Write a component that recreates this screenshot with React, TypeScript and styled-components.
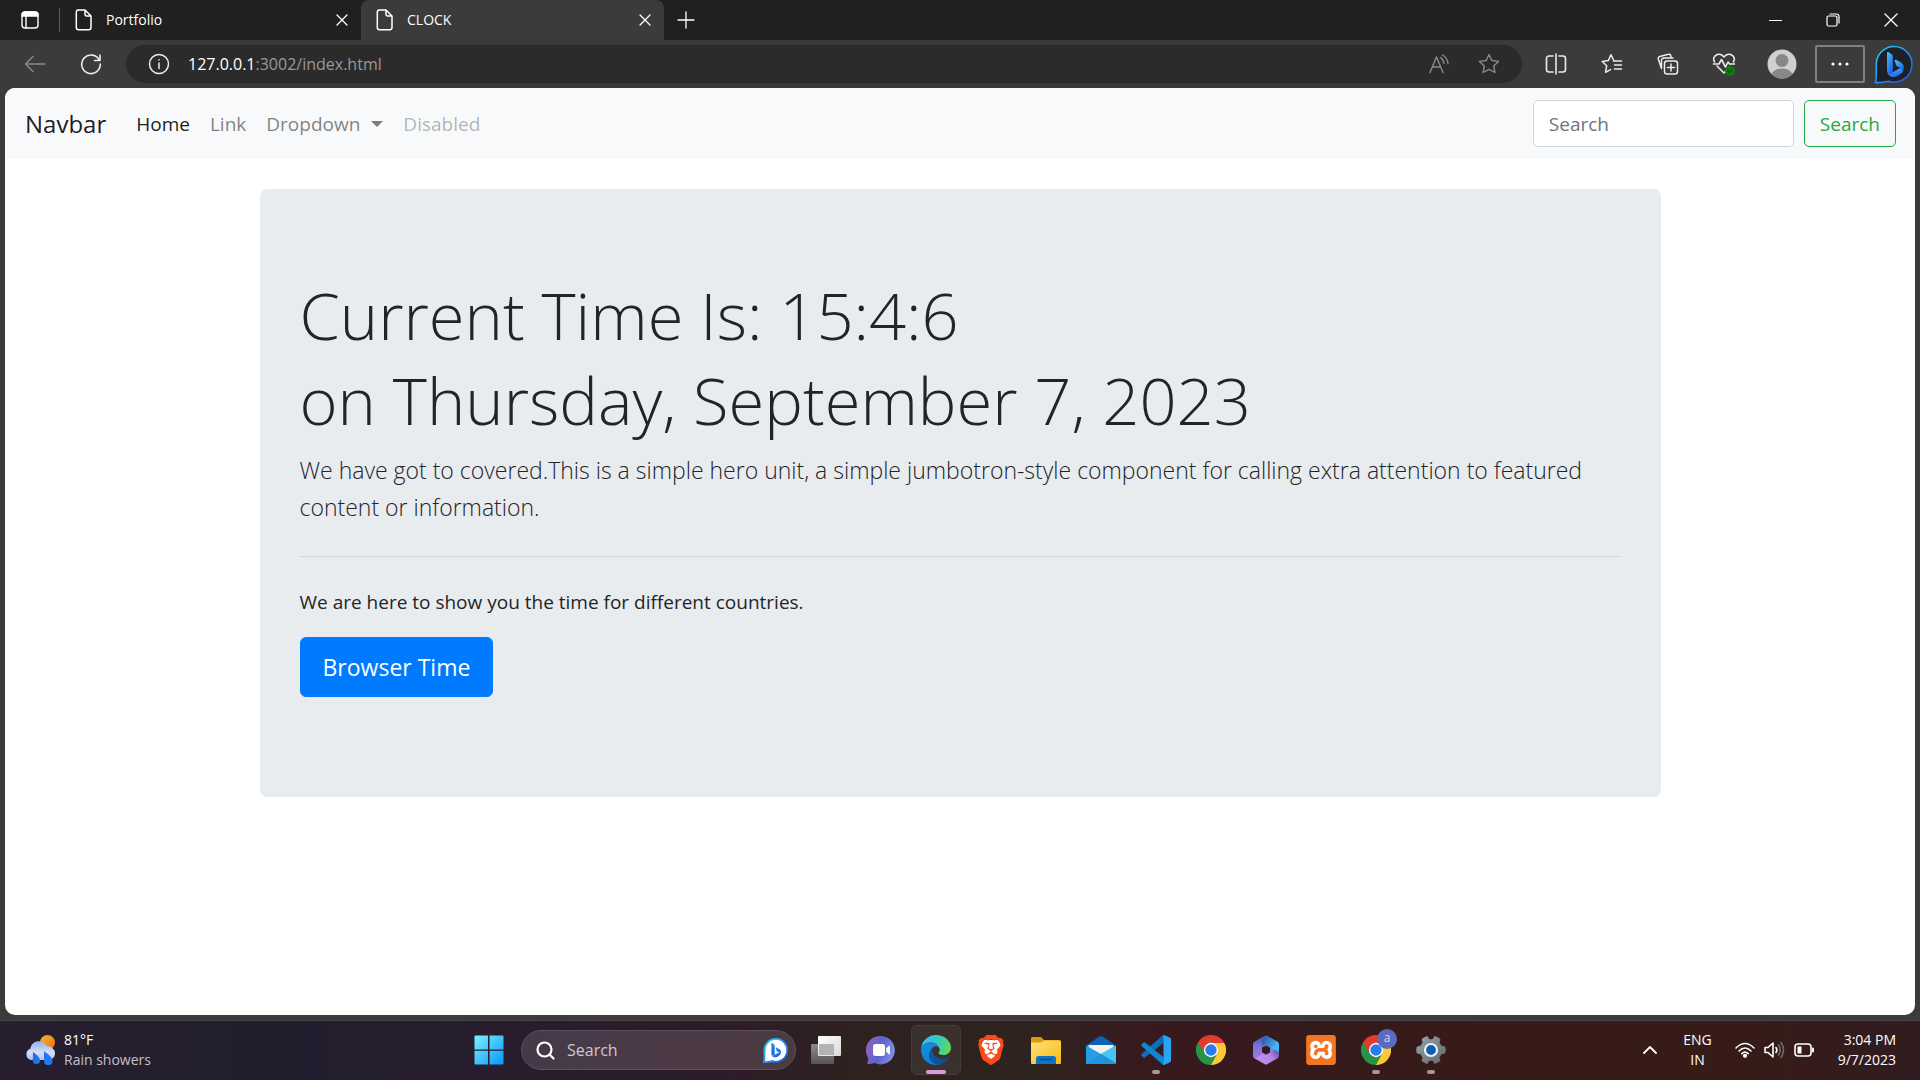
import React from "react";
import styled, { createGlobalStyle } from "styled-components";
import { SiBrave, SiXampp } from "react-icons/si";
import { BsBing } from "react-icons/bs";

const GlobalStyle = createGlobalStyle`
  *, *::before, *::after { box-sizing: border-box; }
  body {
    margin: 0;
    font-family: "Open Sans", "Noto Sans", sans-serif;
    color: #212529;
    background: #3b3b3b;
  }
  button, input { font-family: inherit; }
  svg { display: block; flex: none; }
`;

/* ---------- layout ---------- */

const Desktop = styled.div`
  min-height: 100vh;
  display: flex;
  flex-direction: column;
`;

const PlainButton = styled.button`
  display: flex;
  align-items: center;
  justify-content: center;
  padding: 0;
  border: 0;
  background: none;
  color: inherit;
`;

/* ---------- tab strip ---------- */

const TabStrip = styled.header`
  display: flex;
  height: 40px;
  background: #202020;
  color: #fff;
`;

const TabActions = styled(PlainButton)`
  width: 60px;
  border-right: 1px solid #5a5a5a;
  margin: 8px 0;
`;

const Tab = styled.div<{ $active?: boolean }>`
  display: flex;
  align-items: center;
  width: ${(p) => (p.$active ? 303 : 301)}px;
  padding: 0 11px 0 15px;
  gap: 13px;
  font-size: 14px;
  border-radius: 8px 8px 0 0;
  background: ${(p) => (p.$active ? "#3b3b3b" : "transparent")};
`;

const TabTitle = styled.span`
  flex: 1;
  line-height: 20px;
`;

const TabClose = styled(PlainButton)`
  width: 16px;
  height: 20px;
`;

const NewTab = styled(PlainButton)`
  width: 44px;
`;

const WindowControls = styled.div`
  display: flex;
  margin-left: auto;
`;

const WindowControl = styled(PlainButton)`
  width: 58px;
`;

/* ---------- toolbar ---------- */

const Toolbar = styled.div`
  display: flex;
  align-items: center;
  height: 48px;
  padding: 0 7px 0 10px;
  background: #3b3b3b;
  color: #e8e8e8;
`;

const ToolButton = styled(PlainButton)<{ $dim?: boolean; $wide?: boolean }>`
  width: ${(p) => (p.$wide ? 54 : 50)}px;
  height: 38px;
  margin-right: 6px;
  color: ${(p) => (p.$dim ? "#8a8a8a" : "#ececec")};
`;

const AddressBar = styled.div`
  display: flex;
  flex: 1;
  align-items: center;
  height: 38px;
  margin: 0 9px 0 4px;
  padding: 0 8px;
  border-radius: 19px;
  background: #2b2b2b;
`;

const AddressButton = styled(ToolButton)`
  margin: 0;
`;

const Url = styled.div`
  flex: 1;
  margin-left: 4px;
  color: #9a9a9a;
  font-size: 16px;
  line-height: 24px;
`;

const Host = styled.span`
  color: #fff;
`;

const MenuButton = styled(ToolButton)`
  border: 2px solid #7d8285;
  border-radius: 2px;
  margin-right: 9px;
`;

const BingButton = styled(PlainButton)`
  width: 39px;
  height: 40px;
`;

/* ---------- page ---------- */

const Page = styled.div`
  flex: 1;
  margin: 0 5px 5px;
  overflow: hidden;
  border-radius: 10px;
  background: #fff;
`;

const Navbar = styled.nav`
  display: flex;
  align-items: center;
  padding: 12px 19px 12px 20px;
  background: #f8f9fa;
  font-size: 19px;
  line-height: 30px;
`;

const Brand = styled.a`
  margin-right: 30px;
  color: rgba(0, 0, 0, 0.9);
  font-size: 24px;
  text-decoration: none;
`;

const NavList = styled.ul`
  display: flex;
  gap: 20px;
  margin: 0;
  padding: 0;
  list-style: none;
`;

const tones = {
  active: "rgba(0, 0, 0, 0.9)",
  normal: "rgba(0, 0, 0, 0.5)",
  disabled: "rgba(0, 0, 0, 0.3)",
};

const NavLink = styled.a<{ $tone: keyof typeof tones }>`
  display: flex;
  align-items: center;
  gap: 11px;
  color: ${(p) => tones[p.$tone]};
  text-decoration: none;
`;

const Caret = styled.span`
  border: 6px solid transparent;
  border-top-color: currentColor;
  border-bottom: 0;
`;

const SearchForm = styled.form`
  display: flex;
  gap: 10px;
  margin-left: auto;
`;

const SearchInput = styled.input`
  width: 261px;
  height: 47px;
  padding: 0 15px;
  border: 1px solid #ced4da;
  border-radius: 5px;
  background: #fff;
  font-size: 19px;
  &::placeholder {
    color: #6c757d;
    opacity: 1;
  }
`;

const SearchButton = styled.button`
  height: 47px;
  padding: 0 15px;
  border: 1px solid #28a745;
  border-radius: 5px;
  background: transparent;
  color: #28a745;
  font-size: 19px;
`;

const Jumbotron = styled.main`
  max-width: 1401px;
  margin: 30px auto;
  padding: 84px 40px 80px;
  border-radius: 7px;
  background: #e9ecef;
`;

const Clock = styled.h1`
  margin: 0 0 9px;
  font-size: 65px;
  font-weight: 300;
  line-height: 85px;
`;

const Lead = styled.p`
  margin: 0;
  font-size: 23px;
  font-weight: 300;
  line-height: 37px;
`;

const Rule = styled.hr`
  margin: 30px 0;
  border: 0;
  border-top: 1px solid rgba(0, 0, 0, 0.1);
`;

const Note = styled.p`
  margin: 0 0 20px;
  font-size: 19px;
  line-height: 30px;
`;

const PrimaryLink = styled.a`
  display: inline-block;
  margin-bottom: 20px;
  padding: 11px 22px;
  border: 1px solid #007bff;
  border-radius: 6px;
  background: #007bff;
  color: #fff;
  font-size: 23px;
  line-height: 36px;
  text-decoration: none;
  vertical-align: top;
`;

/* ---------- taskbar ---------- */

const Taskbar = styled.footer`
  display: grid;
  grid-template-columns: 1fr auto 1fr;
  align-items: center;
  height: 60px;
  padding-bottom: 1px;
  border-top: 1px solid #4a4347;
  background: linear-gradient(90deg, #271e2f 0%, #221e2e 15%, #271d2e 25%, #2d1c2a 38%, #2e211f 44%, #2f2320 54%, #38191e 60%, #351a1b 68%, #381b16 80%, #361b18 92%, #301c20 100%);
  color: #fff;
  font-size: 14px;
  line-height: 20px;
`;

const Weather = styled(PlainButton)`
  justify-self: start;
  gap: 9px;
  margin-left: 25px;
  font-size: 14px;
  line-height: 20px;
  text-align: left;
`;

const Muted = styled.span`
  display: block;
  color: #c4c0c6;
`;

const TaskItems = styled.div`
  display: flex;
  align-items: center;
  gap: 5px;
`;

const TaskButton = styled(PlainButton)<{ $active?: boolean; $running?: boolean }>`
  position: relative;
  width: 50px;
  height: 50px;
  border: 1px solid ${(p) => (p.$active ? "#473c3b" : "transparent")};
  border-radius: 6px;
  background: ${(p) => (p.$active ? "#3a302e" : "none")};
  &::after {
    content: "";
    display: ${(p) => (p.$active || p.$running ? "block" : "none")};
    position: absolute;
    left: 50%;
    bottom: 0;
    width: ${(p) => (p.$active ? 20 : 8)}px;
    height: 4px;
    border-radius: 2px;
    transform: translateX(-50%);
    background: ${(p) => (p.$active ? "#d99be0" : "#a39799")};
  }
`;

const ProfileBadge = styled.span`
  position: absolute;
  top: 3px;
  right: 3px;
  width: 20px;
  height: 20px;
  border-radius: 50%;
  background: #5c6bc0;
  color: #d5daf5;
  font-size: 12px;
  line-height: 18px;
`;

const TaskSearch = styled.label`
  display: flex;
  align-items: center;
  width: 275px;
  height: 40px;
  margin-left: 2px;
  padding: 0 7px 0 14px;
  border: 1px solid #5d4f5e;
  border-radius: 20px;
  background: linear-gradient(90deg, #453a4a, #4c3a46 60%, #4a3b41);
`;

const TaskSearchInput = styled.input`
  flex: 1;
  min-width: 0;
  margin-left: 12px;
  padding: 0;
  border: 0;
  outline: 0;
  background: none;
  color: #fff;
  font-size: 16px;
  &::placeholder {
    color: #cfc8d0;
    opacity: 1;
  }
`;

const Tray = styled.div`
  display: flex;
  align-items: center;
  justify-self: end;
  margin-right: 24px;
`;

const TrayText = styled(PlainButton)<{ $align: "center" | "right" }>`
  display: block;
  font-size: 14px;
  line-height: 20px;
  text-align: ${(p) => p.$align};
`;

const TrayIcons = styled(PlainButton)`
  gap: 9px;
  margin: 0 24px 0 23px;
`;

const TrayArrow = styled(PlainButton)`
  margin-right: 26px;
`;

/* ---------- line icons ---------- */

type LineProps = { w?: number; h?: number; sw?: number; children: React.ReactNode };

const Line = ({ w = 24, h = 24, sw = 1.4, children }: LineProps) => (
  <svg width={w} height={h} viewBox={`0 0 ${w} ${h}`} fill="none" stroke="currentColor" strokeWidth={sw} strokeLinecap="round" strokeLinejoin="round" aria-hidden="true">
    {children}
  </svg>
);

const CloseIcon = ({ size = 12 }: { size?: number }) => (
  <Line w={size} h={size} sw={1.3}>
    <path d={`M1 1 ${size - 1} ${size - 1}M${size - 1} 1 1 ${size - 1}`} />
  </Line>
);

const FileIcon = () => (
  <Line w={18} h={22} sw={1.5}>
    <path d="M3 1h7l6 6v11.500a2.200 2.200 0 0 1-2.200 2.200H3.500A2.200 2.200 0 0 1 1.300 18.500V3A2 2 0 0 1 3 1zM10 1v4.500A1.500 1.500 0 0 0 11.500 7H16" />
  </Line>
);

const TabActionsIcon = () => (
  <Line w={18} h={18}>
    <rect x="1" y="1" width="16" height="16" rx="3" />
    <path d="M1 5V4a3 3 0 0 1 3-3h10a3 3 0 0 1 3 3v1z" fill="currentColor" />
    <path d="M5 5v12" />
  </Line>
);

const BingBubble = ({ size, light }: { size: number; light?: boolean }) => (
  <svg width={size} height={size} viewBox="0 0 40 40" aria-hidden="true">
    <defs>
      <linearGradient id={`bubble${size}`} x1="0" y1="0" x2="1" y2="1">
        <stop offset="0" stopColor="#20d5f5" />
        <stop offset=".55" stopColor="#2b8bf5" />
        <stop offset="1" stopColor="#1b4fd0" />
      </linearGradient>
      <linearGradient id={`b${size}`} x1="0" y1="0" x2="0.6" y2="1">
        <stop offset="0" stopColor={light ? "#1a9ce8" : "#45c5fa"} />
        <stop offset="1" stopColor="#1f62e6" />
      </linearGradient>
    </defs>
    <path
      d="M20.500 1.500a18.300 18.300 0 1 1-5.600 35.700C10 38 5.500 39 1.500 38.500 2.600 35 2.200 31 2.400 20A18.200 18.200 0 0 1 20.500 1.500z"
      fill={light ? "#fff" : "#1d2026"}
      stroke={`url(#bubble${size})`}
      strokeWidth={light ? 3 : 1.600}
    />
    <g transform={light ? "translate(9 8) scale(1.45)" : "translate(8.500 7) scale(1.62)"}>
      <BsBing size={16} fill={`url(#b${size})`} />
    </g>
  </svg>
);

/* ---------- application logos ---------- */

const WeatherIcon = () => (
  <svg width="30" height="30" viewBox="0 0 30 30" aria-hidden="true">
    <defs>
      <linearGradient id="sun" x1="0" y1="0" x2="1" y2="1">
        <stop offset="0" stopColor="#f9b62e" />
        <stop offset="1" stopColor="#ee6a14" />
      </linearGradient>
      <linearGradient id="cloud" x1="0" y1="0" x2="0" y2="1">
        <stop offset="0" stopColor="#8fb0f0" />
        <stop offset=".6" stopColor="#d4e0fa" />
        <stop offset="1" stopColor="#a9c1f3" />
      </linearGradient>
      <linearGradient id="drop" x1="0" y1="0" x2="1" y2="1">
        <stop offset="0" stopColor="#2c67e8" />
        <stop offset="1" stopColor="#1583fb" />
      </linearGradient>
    </defs>
    <circle cx="22.500" cy="7.500" r="7.500" fill="url(#sun)" />
    <path d="M6 25a6 6 0 0 1-.500-11.500C6 9 9.500 6.300 14 6.300c4 0 6.800 2 8 5 4 0 8 2.700 8 7 0 4-3 6.700-6.500 6.700z" fill="url(#cloud)" />
    <path d="M8 17c4 3 7 5.500 7 8.500a3.600 3.600 0 0 1-7.200 0zM19 16c5 4 8.500 6.500 8.500 10a4.200 4.200 0 0 1-8.500 0z" fill="url(#drop)" />
  </svg>
);

const WindowsIcon = () => (
  <svg width="30" height="30" viewBox="0 0 30 30" aria-hidden="true">
    <defs>
      <linearGradient id="win" x1="0" y1="0" x2="30" y2="30" gradientUnits="userSpaceOnUse">
        <stop offset="0" stopColor="#7df3fb" />
        <stop offset="1" stopColor="#0795fb" />
      </linearGradient>
    </defs>
    <path d="M1.500.5H14v14H.5v-13a1 1 0 0 1 1-1zM15.500.5h13a1 1 0 0 1 1 1v13h-14zM.5 15.700H14v13.800H1.500a1 1 0 0 1-1-1zM15.500 15.700h14v12.800a1 1 0 0 1-1 1h-13z" fill="url(#win)" />
  </svg>
);

const TaskViewIcon = () => (
  <svg width="30" height="30" viewBox="0 0 30 30" aria-hidden="true">
    <defs>
      <linearGradient id="tv1" x1="0" y1="0" x2="1" y2="1">
        <stop offset="0" stopColor="#fff" />
        <stop offset="1" stopColor="#dadada" />
      </linearGradient>
      <linearGradient id="tv2" x1="0" y1="0" x2="0" y2="1">
        <stop offset="0" stopColor="#8b8b8b" />
        <stop offset="1" stopColor="#555" />
      </linearGradient>
    </defs>
    <rect y="9" width="23" height="20" rx="1" fill="url(#tv2)" />
    <rect x="7" y="1" width="23" height="20" rx="1" fill="url(#tv1)" />
    <path d="M8 9h15v11H8z" fill="#b3b3b3" />
  </svg>
);

const ChatIcon = () => (
  <svg width="30" height="30" viewBox="0 0 30 30" aria-hidden="true">
    <defs>
      <linearGradient id="chat" x1="0" y1="0.300" x2="1" y2="0.600">
        <stop offset="0" stopColor="#8f63b8" />
        <stop offset=".5" stopColor="#5e63ce" />
        <stop offset="1" stopColor="#8191e6" />
      </linearGradient>
    </defs>
    <path d="M15 1a14.200 14.200 0 1 1-6.500 27C6 29 3 29.300 1 29c1-2 1.500-4.500 1-6.500A14.200 14.200 0 0 1 15 1z" fill="url(#chat)" />
    <rect x="7" y="9" width="12" height="12" rx="2.500" fill="#fff" />
    <path d="M20.200 13.300 23 10.700q1-.6 1 .6v7.400q0 1.200-1 .6l-2.800-2.600z" fill="#fff" />
  </svg>
);

const EdgeIcon = () => (
  <svg width="30" height="30" viewBox="0 0 256 256" aria-hidden="true">
    <defs>
      <linearGradient id="e1" x1="60" y1="177" x2="240" y2="177" gradientUnits="userSpaceOnUse">
        <stop offset="0" stopColor="#0c59a4" />
        <stop offset="1" stopColor="#114a8b" />
      </linearGradient>
      <linearGradient id="e2" x1="150" y1="80" x2="40" y2="220" gradientUnits="userSpaceOnUse">
        <stop offset="0" stopColor="#1b7fc4" />
        <stop offset=".5" stopColor="#148cd8" />
        <stop offset="1" stopColor="#0a84de" />
      </linearGradient>
      <linearGradient id="e3" x1="10" y1="60" x2="250" y2="130" gradientUnits="userSpaceOnUse">
        <stop offset="0" stopColor="#35c1f1" />
        <stop offset=".5" stopColor="#35c8c0" />
        <stop offset="1" stopColor="#63db52" />
      </linearGradient>
    </defs>
    <path fill="url(#e1)" d="M231 190.500c-3.400 1.800-6.900 3.400-10.500 4.700a101.500 101.500 0 0 1-35.900 6.400c-47.300 0-88.500-32.500-88.500-74.300.1-11.400 6.400-21.900 16.400-27.300-42.800 1.800-53.800 46.400-53.800 72.500 0 73.900 68.100 81.400 82.800 81.400 7.900 0 19.800-2.300 27-4.600l1.300-.4a128.300 128.300 0 0 0 66.600-52.800 4 4 0 0 0-5.400-5.600z" />
    <path fill="url(#e2)" d="M105.700 241.400a79.200 79.200 0 0 1-22.700-21.300 80.700 80.700 0 0 1 29.500-120c3.200-1.500 8.500-4.100 15.600-4a32.400 32.400 0 0 1 25.700 13 31.900 31.900 0 0 1 6.300 18.700c0-.2 24.500-79.600-80-79.600-43.900 0-80 41.600-80 78.200a130.200 130.200 0 0 0 12.100 56 128 128 0 0 0 156.400 67 75.500 75.500 0 0 1-62.800-8z" />
    <path fill="url(#e3)" d="M152.300 148.900c-.8 1-3.300 2.500-3.300 5.700 0 2.600 1.700 5.100 4.700 7.200 14.400 10 41.500 8.700 41.600 8.700 10.700 0 21.100-2.900 30.300-8.300a61.400 61.400 0 0 0 30.400-52.900c.3-22.400-8-37.300-11.300-43.900C223.500 23.900 177.700 0 128 0A128 128 0 0 0 0 126.200C.5 89.700 36.800 60.200 80 60.200c3.500 0 23.500.3 42 10.100 16.300 8.600 24.900 18.900 30.800 29.200 6.200 10.700 7.300 24.100 7.300 29.500 0 5.300-2.700 13.300-7.800 19.900z" />
  </svg>
);

const BraveIcon = () => (
  <svg width="30" height="30" viewBox="0 0 30 30" aria-hidden="true">
    <path d="M7 5h16l2 6-4 12-6 4-6-4-4-12z" fill="#fff" />
    <SiBrave size={30} color="#fb4a1c" />
  </svg>
);

const FolderIcon = () => (
  <svg width="30" height="30" viewBox="0 0 30 30" aria-hidden="true">
    <defs>
      <linearGradient id="fold" x1="0" y1="0" x2="1" y2="1">
        <stop offset="0" stopColor="#ffe07a" />
        <stop offset="1" stopColor="#fcb914" />
      </linearGradient>
    </defs>
    <path d="M0 3.500A1.500 1.500 0 0 1 1.500 2H10l3 3h15a2 2 0 0 1 2 2v4H0z" fill="#dd9b08" />
    <path d="M0 7.500h10l3-2h15.500A1.500 1.500 0 0 1 30 7v21a1 1 0 0 1-1 1H1a1 1 0 0 1-1-1z" fill="url(#fold)" />
    <path d="M5 29v-5.500a2.500 2.500 0 0 1 2.500-2.500h15a2.500 2.500 0 0 1 2.500 2.500V29z" fill="#0f74c6" />
    <path d="M9 24.500h12" stroke="#0a4f90" strokeWidth="1.300" strokeLinecap="round" />
  </svg>
);

const MailIcon = () => (
  <svg width="30" height="30" viewBox="0 0 30 30" aria-hidden="true">
    <path d="M0 10.500 13.500 1.600q1.500-.9 3 0L30 10.500 15 20z" fill="#0c63b4" />
    <path d="M2.500 10h25v5L15 21 2.500 15z" fill="#f3f3f3" />
    <path d="M0 10.500 15 19l15-8.500V28a1 1 0 0 1-1 1H1a1 1 0 0 1-1-1z" fill="#249fe4" />
    <path d="M15 19l15-8.500V28z" fill="#47c6f6" />
    <path d="M15 19 30 28.500 29 29H1z" fill="#1f93dd" />
  </svg>
);

const CodeIcon = () => (
  <svg width="30" height="30" viewBox="0 0 30 30" aria-hidden="true">
    <path d="M22.500 8 4 22.400q-.8.6-1.500 0L.6 20.700q-.8-.8 0-1.600L21.500.6q.8-.7 1.800-.2z" fill="#0a6fb8" />
    <path d="M22.500 22 4 7.600q-.8-.6-1.500 0L.6 9.300q-.8.8 0 1.600l20.900 18.500q.8.700 1.800.2z" fill="#1285cf" />
    <path d="M21.500.600q.8-.8 2-.4l5.500 2.600q1 .6 1 1.700v21q0 1.200-1 1.700l-5.500 2.600q-1.200.4-2-.4 1 .5 1-1V1.600q0-1.500-1-1z" fill="#2aa5f0" />
  </svg>
);

const chromePart = "M15 8H28.300A15 15 0 0 0 2 7.500L8.900 18.500A7 7 0 0 1 15 8z";

const ChromeIcon = () => (
  <svg width="30" height="30" viewBox="0 0 30 30" aria-hidden="true">
    <path d={chromePart} fill="#fcc934" transform="rotate(120 15 15)" />
    <path d={chromePart} fill="#259547" transform="rotate(240 15 15)" />
    <path d={chromePart} fill="#e33b2e" />
    <circle cx="15" cy="15" r="7.200" fill="#fff" />
    <circle cx="15" cy="15" r="5.700" fill="#2a7bee" />
  </svg>
);

const OfficeIcon = () => (
  <svg width="30" height="30" viewBox="0 0 30 30" aria-hidden="true">
    <defs>
      <linearGradient id="o1" x1="0" y1="0" x2="0" y2="1">
        <stop offset="0" stopColor="#3a58b4" />
        <stop offset=".4" stopColor="#7f74dc" />
        <stop offset="1" stopColor="#b07ce0" />
      </linearGradient>
      <linearGradient id="o2" x1="0" y1="0" x2="1" y2="0.500">
        <stop offset="0" stopColor="#274c9e" />
        <stop offset=".7" stopColor="#3fa6e8" />
        <stop offset="1" stopColor="#55c8f8" />
      </linearGradient>
      <linearGradient id="o3" x1="0" y1="0.500" x2="1" y2="0">
        <stop offset="0" stopColor="#c68df0" />
        <stop offset=".5" stopColor="#b184e6" />
        <stop offset="1" stopColor="#44398f" />
      </linearGradient>
      <mask id="ring">
        <path d="M15 3 25.500 9v12L15 27 4.500 21V9z" fill="#fff" stroke="#fff" strokeWidth="5" strokeLinejoin="round" />
        <path d="M15 11.500 18 13.200v3.600L15 18.500 12 16.800v-3.600z" fill="#000" stroke="#000" strokeWidth="2" strokeLinejoin="round" />
      </mask>
    </defs>
    <g mask="url(#ring)">
      <path d="M0 0h30v30H0z" fill="url(#o1)" />
      <path d="M14 0h16v21l-10-5.500V12l-5-3-4 2q-1-7 3-11z" fill="url(#o2)" />
      <path d="M2 23q5 1 9-5l4 2 13-8 2 0v18H2z" fill="url(#o3)" />
      <path d="M20 12l10 0v7l-4-3z" fill="#45b6f0" />
    </g>
  </svg>
);

const XamppIcon = () => (
  <svg width="30" height="30" viewBox="0 0 30 30" aria-hidden="true">
    <rect x="2" y="2" width="26" height="26" rx="2" fill="#fff" />
    <SiXampp size={30} color="#f37623" />
  </svg>
);

const SettingsIcon = () => (
  <svg width="30" height="30" viewBox="0 0 30 30" aria-hidden="true">
    <defs>
      <linearGradient id="gear" x1="0" y1="0" x2="1" y2="1">
        <stop offset="0" stopColor="#9aa3a8" />
        <stop offset="1" stopColor="#5e686e" />
      </linearGradient>
    </defs>
    <path
      d="M11.300 1.600 13 4.500q2 .8 4 0l1.700-2.900q3 .6 5.300 2.700l-1 3.200q1.300 1.800 1.900 3.500l3.900 1q1 3 0 6l-3.900 1q-.6 1.900-1.900 3.500l1 3.200q-2.300 2.100-5.300 2.700L17 25.500q-2-.8-4 0l-1.700 2.900q-3-.6-5.300-2.700l1-3.200Q5.700 20.900 5.100 19l-3.900-1q-1-3 0-6l3.900-1Q5.700 9.300 7 7.500L6 4.300q2.300-2.100 5.300-2.700z"
      fill="url(#gear)"
      stroke="url(#gear)"
      strokeLinejoin="round"
    />
    <circle cx="15" cy="15" r="6" fill="#0f5fae" stroke="#eef3f7" strokeWidth="2.200" />
  </svg>
);

const apps = [
  { name: "Chat", icon: <ChatIcon /> },
  { name: "Edge", icon: <EdgeIcon />, active: true },
  { name: "Brave", icon: <BraveIcon /> },
  { name: "File Explorer", icon: <FolderIcon /> },
  { name: "Mail", icon: <MailIcon /> },
  { name: "Visual Studio Code", icon: <CodeIcon />, running: true },
  { name: "Chrome", icon: <ChromeIcon /> },
  { name: "Microsoft 365", icon: <OfficeIcon /> },
  { name: "XAMPP", icon: <XamppIcon /> },
  { name: "Chrome profile", icon: <ChromeIcon />, running: true, badge: "a" },
  { name: "Settings", icon: <SettingsIcon />, running: true },
];

const starPath = "M12 2.500l2.900 6 6.600.9-4.800 4.600 1.200 6.500-5.900-3.100-5.900 3.100 1.200-6.500L2.500 9.400l6.600-.9z";

/* ---------- sections ---------- */

const BrowserTabs = () => (
  <TabStrip>
    <TabActions aria-label="Tab actions"><TabActionsIcon /></TabActions>
    <Tab>
      <FileIcon />
      <TabTitle>Portfolio</TabTitle>
      <TabClose aria-label="Close Portfolio"><CloseIcon /></TabClose>
    </Tab>
    <Tab $active>
      <FileIcon />
      <TabTitle>CLOCK</TabTitle>
      <TabClose aria-label="Close CLOCK"><CloseIcon /></TabClose>
    </Tab>
    <NewTab aria-label="New tab">
      <Line w={18} h={18} sw={1.3}><path d="M9 1v16M1 9h16" /></Line>
    </NewTab>
    <WindowControls>
      <WindowControl aria-label="Minimize">
        <Line w={13} h={13} sw={1.2}><path d="M.5 6.500h12" /></Line>
      </WindowControl>
      <WindowControl aria-label="Restore">
        <Line w={14} h={14} sw={1.2}>
          <rect x="1" y="3" width="10" height="10" rx="1.500" />
          <path d="M4 1h6.500A2.500 2.500 0 0 1 13 3.500V10" />
        </Line>
      </WindowControl>
      <WindowControl aria-label="Close window"><CloseIcon size={14} /></WindowControl>
    </WindowControls>
  </TabStrip>
);

const BrowserToolbar = () => (
  <Toolbar>
    <ToolButton $dim aria-label="Back">
      <Line w={22} h={18}><path d="M21 9H1.500M9 1.500 1.500 9 9 16.500" /></Line>
    </ToolButton>
    <ToolButton aria-label="Refresh">
      <Line w={22} h={22} sw={1.600}><path d="M19.500 7.500A9.300 9.300 0 1 0 20.300 11M20 2v5.500h-5.500" /></Line>
    </ToolButton>
    <AddressBar>
      <AddressButton aria-label="Site information">
        <Line w={22} h={22} sw={1.500}>
          <circle cx="11" cy="11" r="9.500" />
          <path d="M11 10v5.500M11 6.700v.2" />
        </Line>
      </AddressButton>
      <Url><Host>127.0.0.1</Host>:3002/index.html</Url>
      <AddressButton $dim aria-label="Read aloud">
        <Line w={22} h={20}>
          <path d="M2 18.500 8.500 3 15 18.500M4.300 13h8.400M12.500 3.500q3 2 3.500 6M14.500 1q5 3 5.500 8.500" />
        </Line>
      </AddressButton>
      <AddressButton $dim aria-label="Add to favorites">
        <Line><path d={starPath} /></Line>
      </AddressButton>
    </AddressBar>
    <ToolButton aria-label="Split screen">
      <Line w={22} h={22} sw={1.600}>
        <path d="M8 3H4a2.500 2.500 0 0 0-2.500 2.500v11A2.500 2.500 0 0 0 4 19h4M14 3h4a2.500 2.500 0 0 1 2.500 2.500v11A2.500 2.500 0 0 1 18 19h-4M11 1v20" />
      </Line>
    </ToolButton>
    <ToolButton aria-label="Favorites">
      <Line w={22} h={22} sw={1.500}>
        <path d="M12.500 7 10 1.800 7.300 7.600 1.200 8.500l4.500 4.300-1.200 6.500 5-2.700M12.500 8h8M13.500 12h7M13.500 16h7" />
      </Line>
    </ToolButton>
    <ToolButton aria-label="Collections">
      <Line w={22} h={22} sw={1.500}>
        <rect x="7.500" y="8" width="13" height="13" rx="2.500" />
        <path d="M14 11v7M10.500 14.500h7M4.500 15.500 1.300 6a2 2 0 0 1 1.500-2.500l8.500-2.200a2 2 0 0 1 2.500 1.500l.5 2.200M4.500 15.500V7.500A2.500 2.500 0 0 1 7 5h9" />
      </Line>
    </ToolButton>
    <ToolButton aria-label="Browser essentials">
      <Line w={24} h={24} sw={1.600}>
        <path d="M2.500 10C0 5 4 2 7.500 2.300 10 2.500 12 5 12 5s2-2.500 4.500-2.700C20 2 24 5 21.500 10M5 14l7 7 2.500-2.500M1.500 12H7l2.500-4.500 4 7.500 2.500-5 1.500 2h5" />
        <circle cx="18" cy="19" r="5" fill="#107c10" stroke="none" />
        <path d="M16 19l1.500 1.500L20 18" stroke="#0a4f0a" />
      </Line>
    </ToolButton>
    <ToolButton $wide aria-label="Profile">
      <svg width="30" height="30" viewBox="0 0 30 30" aria-hidden="true">
        <clipPath id="avatar"><circle cx="15" cy="15" r="14.500" /></clipPath>
        <circle cx="15" cy="15" r="14.500" fill="#d2d0ce" />
        <circle cx="15" cy="11.500" r="6.500" fill="#8a8886" />
        <ellipse cx="15" cy="27" rx="11" ry="7.500" fill="#8a8886" clipPath="url(#avatar)" />
      </svg>
    </ToolButton>
    <MenuButton aria-label="Settings and more">
      <svg width="18" height="4" viewBox="0 0 18 4" fill="#fff" aria-hidden="true">
        <circle cx="2" cy="2" r="1.600" /><circle cx="9" cy="2" r="1.600" /><circle cx="16" cy="2" r="1.600" />
      </svg>
    </MenuButton>
    <BingButton aria-label="Bing chat"><BingBubble size={39} /></BingButton>
  </Toolbar>
);

const SiteNavbar = () => (
  <Navbar>
    <Brand href="#">Navbar</Brand>
    <NavList>
      <li><NavLink href="#" $tone="active">Home</NavLink></li>
      <li><NavLink href="#" $tone="normal">Link</NavLink></li>
      <li><NavLink href="#" $tone="normal">Dropdown<Caret /></NavLink></li>
      <li><NavLink href="#" $tone="disabled" aria-disabled="true">Disabled</NavLink></li>
    </NavList>
    <SearchForm onSubmit={(e) => e.preventDefault()}>
      <SearchInput type="search" placeholder="Search" aria-label="Search" />
      <SearchButton type="submit">Search</SearchButton>
    </SearchForm>
  </Navbar>
);

const SystemTaskbar = () => (
  <Taskbar>
    <Weather>
      <WeatherIcon />
      <span>81°F<Muted>Rain showers</Muted></span>
    </Weather>
    <TaskItems>
      <TaskButton aria-label="Start"><WindowsIcon /></TaskButton>
      <TaskSearch>
        <Line w={19} h={19} sw={2.200}>
          <circle cx="8.500" cy="8.500" r="7" />
          <path d="M13.800 13.800 17.500 17.500" />
        </Line>
        <TaskSearchInput type="text" placeholder="Search" aria-label="Taskbar search" />
        <BingBubble size={25} light />
      </TaskSearch>
      <TaskButton aria-label="Task view"><TaskViewIcon /></TaskButton>
      {apps.map((app) => (
        <TaskButton key={app.name} aria-label={app.name} $active={app.active} $running={app.running}>
          {app.icon}
          {app.badge && <ProfileBadge>{app.badge}</ProfileBadge>}
        </TaskButton>
      ))}
    </TaskItems>
    <Tray>
      <TrayArrow aria-label="Show hidden icons">
        <Line w={14} h={10} sw={1.800}><path d="M1 8l6-6 6 6" /></Line>
      </TrayArrow>
      <TrayText $align="center">ENG<br />IN</TrayText>
      <TrayIcons aria-label="Network, volume, battery">
        <Line w={20} h={16} sw={1.600}>
          <path d="M1 6q9-9 18 0M4 9q6-6 12 0M6.800 11.700q3.200-3 6.400 0" />
          <circle cx="10" cy="13.800" r="1.300" fill="currentColor" />
        </Line>
        <Line w={21} h={18} sw={1.600}>
          <path d="M1 6.500h3l5-4.500v14l-5-4.500H1z" />
          <path d="M12 6.500q1.800 2.500 0 5" />
          <path d="M14.500 4q3.500 5 0 10M17 1.500q5 7.500 0 15" stroke="#796a69" />
        </Line>
        <Line w={20} h={14} sw={1.600}>
          <rect x="1" y="1" width="16" height="12" rx="3" />
          <path d="M19 5.500v3" strokeWidth="2" />
          <rect x="3.500" y="3.500" width="4" height="7" fill="currentColor" stroke="none" />
        </Line>
      </TrayIcons>
      <TrayText $align="right">3:04 PM<br />9/7/2023</TrayText>
    </Tray>
  </Taskbar>
);

export default function App() {
  return (
    <Desktop>
      <GlobalStyle />
      <BrowserTabs />
      <BrowserToolbar />
      <Page>
        <SiteNavbar />
        <Jumbotron>
          <Clock>Current Time Is: 15:4:6<br />on Thursday, September 7, 2023</Clock>
          <Lead>
            We have got to covered.This is a simple hero unit, a simple jumbotron-style component for calling extra attention to featured content or information.
          </Lead>
          <Rule />
          <Note>We are here to show you the time for different countries.</Note>
          <PrimaryLink href="#" role="button">Browser Time</PrimaryLink>
        </Jumbotron>
      </Page>
      <SystemTaskbar />
    </Desktop>
  );
}
